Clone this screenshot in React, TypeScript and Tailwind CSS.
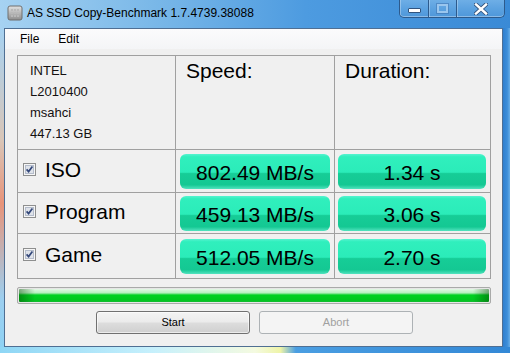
import React from "react";

function CheckBox() {
  return (
    <svg width="13" height="13" viewBox="0 0 13 13" className="shrink-0">
      <rect x="0.5" y="0.5" width="12" height="12" fill="#f6f6f6" stroke="#8e8f8f" />
      <rect x="2.5" y="2.5" width="8" height="8" fill="#dfe3ea" stroke="#b4bccb" />
      <path d="M3.6 6.4 L5.6 8.6 L9.4 3.6" fill="none" stroke="#34487a" strokeWidth="1.7" />
    </svg>
  );
}

function DriveIcon() {
  return (
    <svg width="16" height="16" viewBox="0 0 16 16" className="shrink-0">
      <defs>
        <linearGradient id="dg" x1="0" y1="0" x2="0" y2="1">
          <stop offset="0" stopColor="#e2e2e2" />
          <stop offset="1" stopColor="#8d8d8d" />
        </linearGradient>
      </defs>
      <rect x="1" y="1" width="14" height="14" rx="2" fill="url(#dg)" stroke="#6f6f6f" />
      {[4, 7, 10].map((y) =>
        [4, 7, 10].map((x) => <rect key={`${x}-${y}`} x={x} y={y} width="2" height="2" fill="#b8b8b8" />)
      )}
    </svg>
  );
}

function GreenBar({ text, ml, mr }: { text: string; ml: string; mr: string }) {
  return (
    <div
      className={`h-[35px] flex-1 rounded-[6px] flex items-center justify-center text-[21px] leading-none text-black bg-[linear-gradient(180deg,#56f3d0_0%,#30efbd_8%,#2becb9_52%,#16cd97_56%,#14c893_88%,#52e3bf_100%)] ${ml} ${mr}`}
    >
      <span className="pt-[3px]">{text}</span>
    </div>
  );
}

const rows = [
  { label: "ISO", speed: "802.49 MB/s", dur: "1.34 s", h: "h-[42px]" },
  { label: "Program", speed: "459.13 MB/s", dur: "3.06 s", h: "h-[40px]" },
  { label: "Game", speed: "512.05 MB/s", dur: "2.70 s", h: "h-[44px]" },
];

export default function App() {
  return (
    <div className="w-[510px] h-[353px] overflow-hidden flex flex-col bg-[linear-gradient(90deg,#a6d2f2_0%,#7ab8e8_30%,#4d9be0_60%,#3a8ad6_100%)] font-['Liberation_Sans',Arial,sans-serif]">
      {/* Title bar */}
      <div className="h-[28px] flex items-start shrink-0">
        <div className="ml-[7px] mt-[5px]">
          <DriveIcon />
        </div>
        <div className="ml-[4px] mt-[5px] text-[12px] leading-[16px] text-black">
          AS SSD Copy-Benchmark 1.7.4739.38088
        </div>
        <div className="ml-auto mr-[5px] flex h-[18px] rounded-b-[5px] border border-t-0 border-[#2d5a8c] overflow-hidden bg-[linear-gradient(180deg,#6eaee6_0%,#5ca2e0_50%,#4f97da_100%)] shadow-[inset_0_-1px_0_rgba(255,255,255,0.35)]">
          <div className="w-[28px] h-full flex justify-center shadow-[inset_1px_0_0_rgba(255,255,255,0.3)]">
            <div className="mt-[8px] w-[13px] h-[5px] bg-white border border-[#31547e] rounded-[1px]" />
          </div>
          <div className="w-[28px] h-full flex justify-center border-l border-[#2d5a8c] shadow-[inset_1px_0_0_rgba(255,255,255,0.3)]">
            <div className="mt-[4px] w-[11px] h-[9px] border-2 border-[#9ac6ee] shadow-[0_0_0_1px_rgba(60,110,170,0.5)]" />
          </div>
          <div className="w-[48px] h-full flex justify-center border-l border-[#2d5a8c] shadow-[inset_1px_0_0_rgba(255,255,255,0.3)]">
            <svg width="14" height="12" viewBox="0 0 14 12" className="mt-[3px]">
              <path d="M2 1.5 L12 10.5 M12 1.5 L2 10.5" stroke="#34557f" strokeWidth="4.2" strokeLinecap="square" />
              <path d="M2 1.5 L12 10.5 M12 1.5 L2 10.5" stroke="#ffffff" strokeWidth="2.4" strokeLinecap="square" />
            </svg>
          </div>
        </div>
      </div>

      {/* Middle */}
      <div className="flex h-[319px] shrink-0">
        <div className="w-[4px] bg-[linear-gradient(180deg,#a6d2f2_0%,#d9c6b8_35%,#e8947a_55%,#9ccff0_85%,#8fd2f4_100%)]" />
        <div className="w-[499px] h-full border border-[#4f6f93] bg-[#f0f0f0] flex flex-col">
          {/* Menu */}
          <div className="h-[20px] flex items-start gap-[19px] pl-[15px] text-[12px] leading-[20px] text-black bg-[linear-gradient(180deg,#fbfbfc_0%,#f4f5f7_100%)]">
            <span>File</span>
            <span>Edit</span>
          </div>

          {/* Table */}
          <div className="ml-[12px] mt-[6px] w-[474px] grid grid-cols-[157px_158px_155px] gap-px p-px bg-[#a0a0a0]">
            <div className="h-[93px] bg-[#f0f0f0] pl-[12px] pt-[4px] text-[13px] leading-[21px] text-[#141010]">
              <div>INTEL</div>
              <div>L2010400</div>
              <div>msahci</div>
              <div>447.13 GB</div>
            </div>
            <div className="h-[93px] bg-[#f0f0f0] pl-[10px] pt-[3px] text-[21px] leading-[24px] text-black">
              Speed:
            </div>
            <div className="h-[93px] bg-[#f0f0f0] pl-[10px] pt-[3px] text-[21px] leading-[24px] text-black">
              Duration:
            </div>
            {rows.map((r) => (
              <React.Fragment key={r.label}>
                <div className={`${r.h} bg-[#f0f0f0] flex items-center pl-[5px] pb-[3px]`}>
                  <CheckBox />
                  <span className="ml-[9px] text-[21px] leading-[24px] text-black">{r.label}</span>
                </div>
                <div className={`${r.h} bg-[#f0f0f0] flex items-center`}>
                  <GreenBar text={r.speed} ml="ml-[4px]" mr="mr-[4px]" />
                </div>
                <div className={`${r.h} bg-[#f0f0f0] flex items-center`}>
                  <GreenBar text={r.dur} ml="ml-[3px]" mr="mr-[4px]" />
                </div>
              </React.Fragment>
            ))}
          </div>

          {/* Progress */}
          <div className="ml-[12px] mt-[8px] w-[474px] h-[17px] rounded-[2px] border border-[#a9aaa9] p-px bg-[#e6e6e6]">
            <div className="w-full h-full rounded-[1px] bg-[linear-gradient(90deg,rgba(0,70,0,0.45)_0px,rgba(0,70,0,0)_16px,rgba(0,70,0,0)_calc(100%-16px),rgba(0,70,0,0.45)_100%),linear-gradient(180deg,#e3f8e5_0%,#b6efbe_30%,#2fd84a_42%,#00d020_50%,#00c81e_85%,#14bb33_100%)]" />
          </div>

          {/* Buttons */}
          <div className="mt-[7px] flex pl-[91px] gap-[9px]">
            <div className="w-[154px] h-[23px] rounded-[3px] border border-[#707070] flex items-center justify-center text-[11px] text-black bg-[linear-gradient(180deg,#f3f3f3_0%,#ebebeb_48%,#dddddd_52%,#cfcfcf_100%)] shadow-[inset_0_0_0_1px_rgba(255,255,255,0.6)]">
              Start
            </div>
            <div className="w-[154px] h-[23px] rounded-[3px] border border-[#adb2b5] flex items-center justify-center text-[11px] text-[#a0a0a0] bg-[#f4f4f4]">
              Abort
            </div>
          </div>
        </div>
        <div className="w-[7px] bg-[linear-gradient(90deg,#2f7fcf_0%,#3d8ed9_60%,#6aaee6_100%)]" />
      </div>

      {/* Bottom frame */}
      <div className="h-[6px] shrink-0 bg-[linear-gradient(90deg,#8ed6f5_0%,#c6f0fc_30%,#f4fae0_50%,#eef4a8_55%,#4a9ee2_58%,#3388d6_100%)]" />
    </div>
  );
}
